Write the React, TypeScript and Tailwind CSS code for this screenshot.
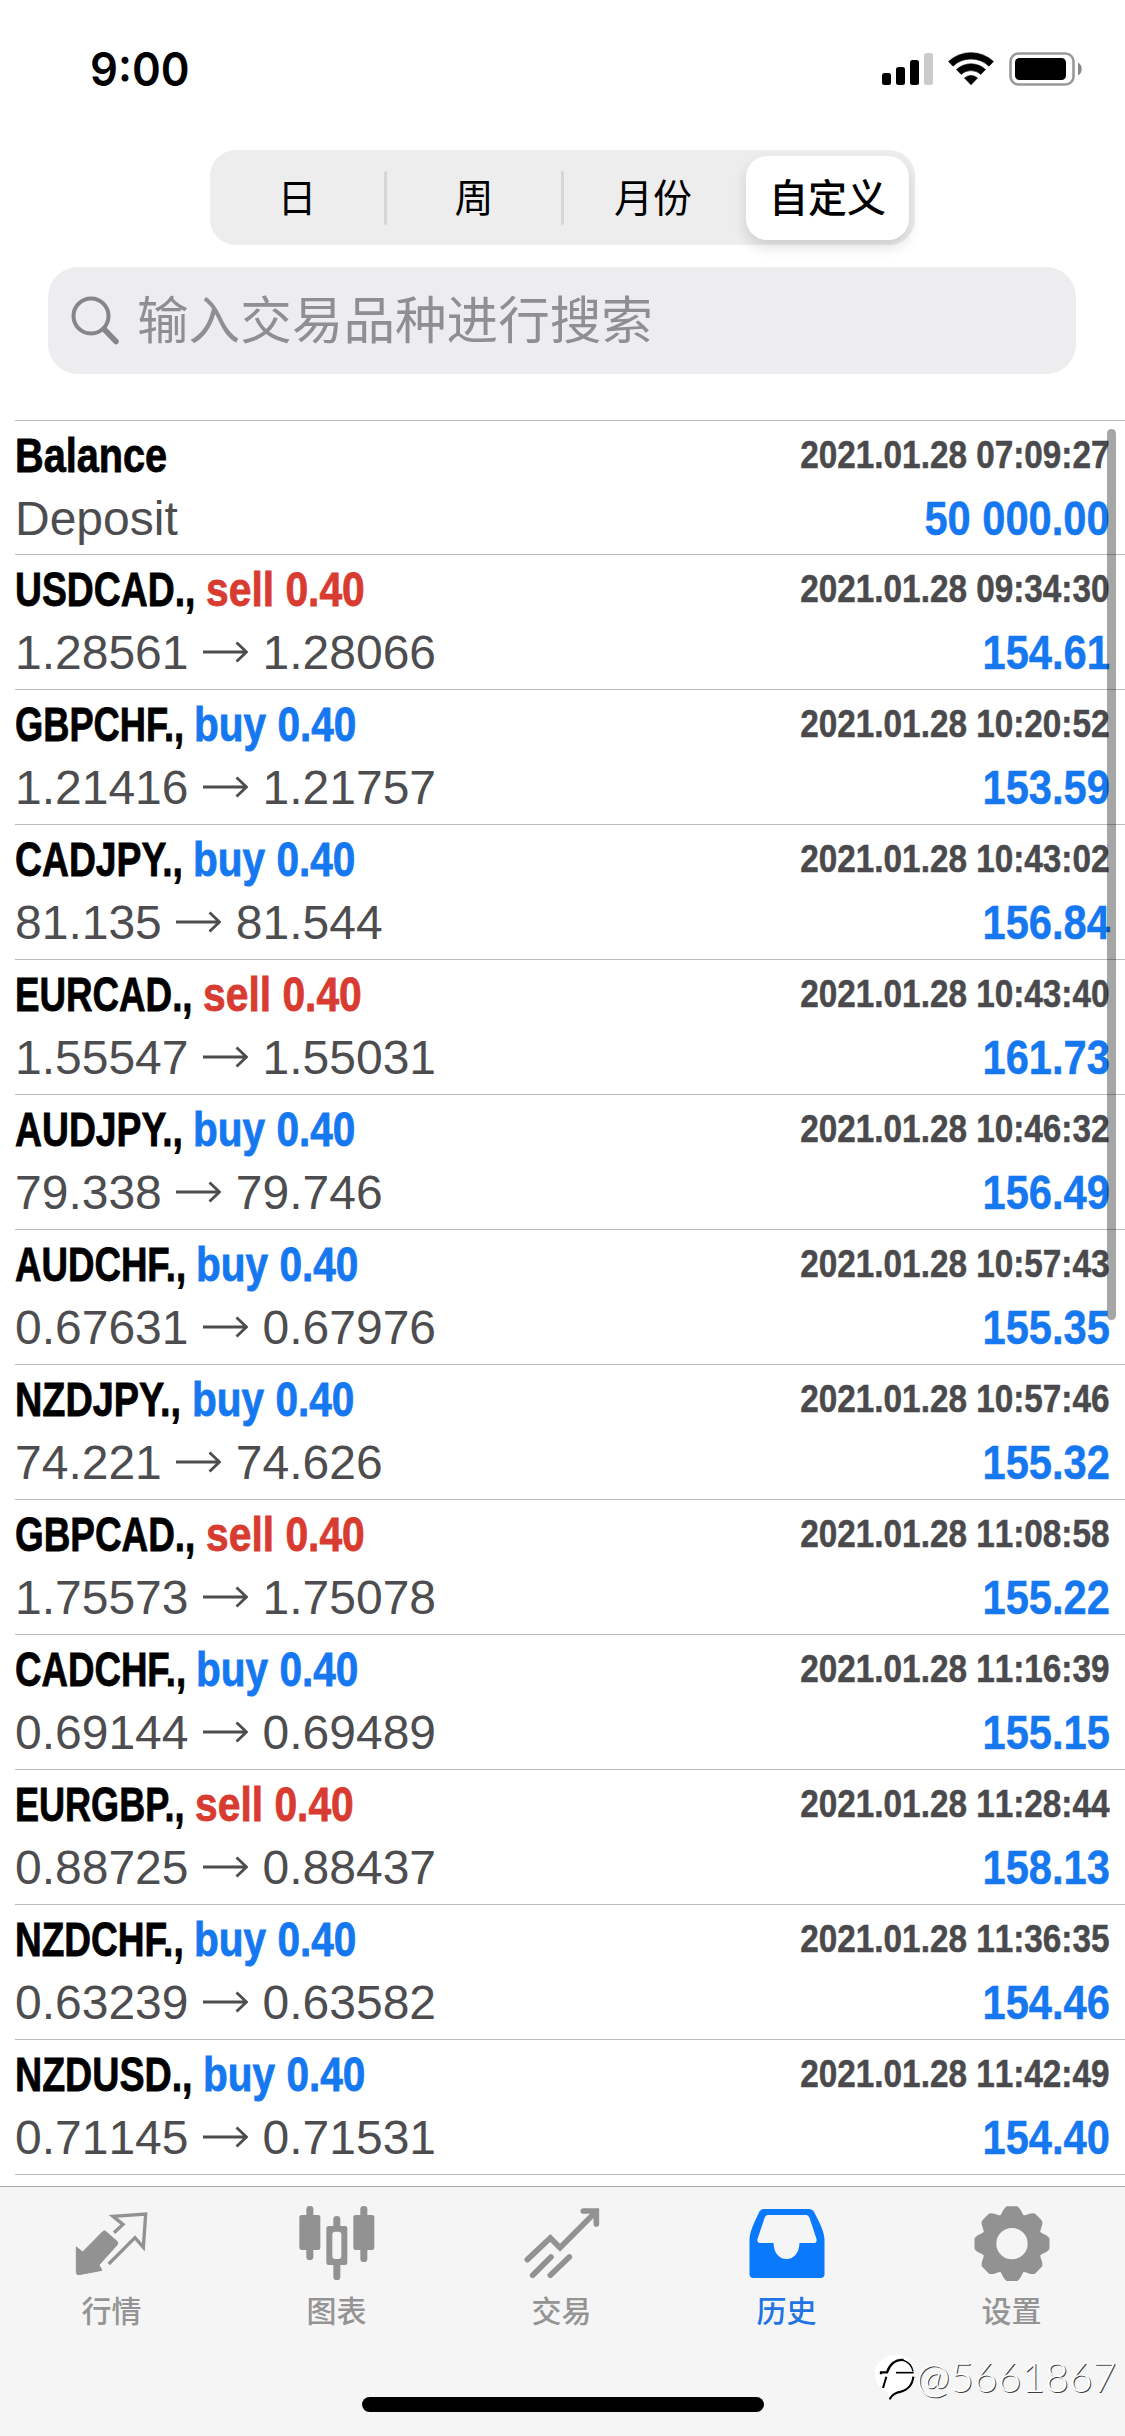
import { ReactNode, useLayoutEffect, useRef, useState } from 'react';

type Deal = {
  symbol: string;
  symbolWidth: number;
  side: 'buy' | 'sell';
  open: string;
  close: string;
  time: string;
  profit: string;
};

const DEALS: Deal[] = [
  { symbol: 'USDCAD.', symbolWidth: 190.5, side: 'sell', open: '1.28561', close: '1.28066', time: '09:34:30', profit: '154.61' },
  { symbol: 'GBPCHF.', symbolWidth: 179, side: 'buy', open: '1.21416', close: '1.21757', time: '10:20:52', profit: '153.59' },
  { symbol: 'CADJPY.', symbolWidth: 178, side: 'buy', open: '81.135', close: '81.544', time: '10:43:02', profit: '156.84' },
  { symbol: 'EURCAD.', symbolWidth: 187.5, side: 'sell', open: '1.55547', close: '1.55031', time: '10:43:40', profit: '161.73' },
  { symbol: 'AUDJPY.', symbolWidth: 178, side: 'buy', open: '79.338', close: '79.746', time: '10:46:32', profit: '156.49' },
  { symbol: 'AUDCHF.', symbolWidth: 181, side: 'buy', open: '0.67631', close: '0.67976', time: '10:57:43', profit: '155.35' },
  { symbol: 'NZDJPY.', symbolWidth: 176.5, side: 'buy', open: '74.221', close: '74.626', time: '10:57:46', profit: '155.32' },
  { symbol: 'GBPCAD.', symbolWidth: 190.5, side: 'sell', open: '1.75573', close: '1.75078', time: '11:08:58', profit: '155.22' },
  { symbol: 'CADCHF.', symbolWidth: 181, side: 'buy', open: '0.69144', close: '0.69489', time: '11:16:39', profit: '155.15' },
  { symbol: 'EURGBP.', symbolWidth: 179.5, side: 'sell', open: '0.88725', close: '0.88437', time: '11:28:44', profit: '158.13' },
  { symbol: 'NZDCHF.', symbolWidth: 179, side: 'buy', open: '0.63239', close: '0.63582', time: '11:36:35', profit: '154.46' },
  { symbol: 'NZDUSD.', symbolWidth: 188, side: 'buy', open: '0.71145', close: '0.71531', time: '11:42:49', profit: '154.40' },
];

// Squeezes a line of text horizontally so it takes exactly `width` pixels.
function FitText({ width, children }: { width: number; children: string }) {
  const ref = useRef<HTMLSpanElement>(null);
  const [scale, setScale] = useState(1);

  useLayoutEffect(() => {
    if (ref.current) setScale(width / ref.current.offsetWidth);
  }, [width, children]);

  return (
    <span className="block shrink-0" style={{ width }}>
      <span
        ref={ref}
        className="inline-block origin-left whitespace-pre"
        style={{ transform: `scaleX(${scale})` }}
      >
        {children}
      </span>
    </span>
  );
}

function StatusBar() {
  return (
    <div className="flex h-[150px] items-start justify-between pt-[52px] pr-[43px] pl-[90px]">
      <span className="origin-left scale-x-[0.93] font-['Inter'] text-[47px] leading-[34px] font-semibold">
        9:00
      </span>
      <svg width="201" height="34" viewBox="0 0 201 34">
        <rect x="1" y="21" width="9" height="12" rx="2.5" />
        <rect x="15" y="15" width="9" height="18" rx="2.5" />
        <rect x="29" y="8" width="9" height="25" rx="2.5" />
        <rect x="43" y="1" width="9" height="32" rx="2.5" fill="#cbcbcb" />
        <path d="M67.5 9.5 A33 33 0 0 1 112.5 9.5 L108 14.2 A26 26 0 0 0 72 14.2 Z" strokeLinejoin="round" stroke="#000" strokeWidth="0.6" />
        <path d="M75.5 17.6 A21 21 0 0 1 104.500 17.600 L99.800 22.400 A14.500 14.500 0 0 0 80.200 22.400 Z" strokeLinejoin="round" stroke="#000" strokeWidth="0.6" />
        <path d="M83.500 26 A9.500 9.500 0 0 1 96.500 26 L90 32.800 Z" strokeLinejoin="round" stroke="#000" strokeWidth="0.6" />
        <rect x="129.500" y="1.500" width="63" height="31" rx="8" fill="none" stroke="#999" strokeWidth="2.600" />
        <rect x="134" y="6" width="51" height="22" rx="4.500" />
        <path d="M197 10.500 a7.500 7.500 0 0 1 0 13 Z" fill="#888" />
      </svg>
    </div>
  );
}

function PeriodTabs() {
  return (
    <div className="mx-auto flex h-[95px] w-[705px] items-center rounded-[26px] bg-[#ededed] text-[39px] leading-none">
      <span className="w-[174px] text-center">日</span>
      <span className="h-[54px] w-[3px] rounded bg-[#d6d6d7]" />
      <span className="w-[174px] text-center">周</span>
      <span className="h-[54px] w-[3px] rounded bg-[#d6d6d7]" />
      <span className="w-[178px] text-center">月份</span>
      <span className="ml-[4px] flex h-[84px] w-[163px] items-center justify-center rounded-[21px] bg-white font-medium shadow-[0_7px_14px_rgba(0,0,0,0.13)]">
        自定义
      </span>
    </div>
  );
}

function SearchField() {
  return (
    <div className="mt-[22px] ml-12 flex h-[107px] w-[1028px] items-center rounded-[30px] bg-[#ededef] pl-[23px]">
      <svg className="shrink-0" width="49" height="50" viewBox="0 0 49 50" fill="none" stroke="#868688">
        <circle cx="20" cy="20" r="17.500" strokeWidth="4" />
        <path d="M33 33 L45 45.500" strokeWidth="5.500" strokeLinecap="round" />
      </svg>
      <span className="ml-[17px] text-[51.600px] leading-none text-[#8f8f92]">
        输入交易品种进行搜索
      </span>
    </div>
  );
}

function HistoryRow({ title, detail, time, amount }: { title: ReactNode; detail: ReactNode; time: string; amount: string }) {
  return (
    <div className="ml-[15px] flex h-[135px] justify-between border-t border-[#bcbcbe] pt-[5px] pr-[15px] font-['Liberation_Sans',sans-serif]">
      <div>
        <div className="flex h-[60px] text-[48px] leading-[60px] font-bold [-webkit-text-stroke:0.8px]">{title}</div>
        <div className="flex h-[65px] text-[48px] leading-[65px] text-[#4d4d50] [font-kerning:none]">{detail}</div>
      </div>
      <div className="flex flex-col items-end font-bold [font-kerning:none] [-webkit-text-stroke:0.5px]">
        <div className="h-[60px] origin-right scale-x-[0.865] text-[38.500px] leading-[57px] whitespace-nowrap text-[#4a4a4d]">
          2021.01.28 {time}
        </div>
        <div className="h-[65px] origin-right scale-x-[0.867] text-[48px] leading-[65px] whitespace-nowrap text-[#1678f0]">
          {amount}
        </div>
      </div>
    </div>
  );
}

function PriceArrow() {
  return (
    <svg className="mt-[21px] mr-[15px] ml-[14px]" width="45" height="22" viewBox="0 0 45 22" fill="none" stroke="#4d4d50" strokeWidth="2.800">
      <path d="M0 11 H43 M33.500 1.500 L43.500 11 L33.500 20.500" />
    </svg>
  );
}

function History() {
  return (
    <div className="relative mt-[46px] h-[1766px] overflow-hidden">
      <div className="-mb-px">
        <HistoryRow
          title={<FitText width={152}>Balance</FitText>}
          detail={<span>Deposit</span>}
          time="07:09:27"
          amount="50 000.00"
        />
      </div>
      {DEALS.map((d) => (
        <HistoryRow
          key={d.symbol}
          title={
            <>
              <FitText width={d.symbolWidth}>{`${d.symbol}, `}</FitText>
              <span
                className={
                  d.side === 'buy'
                    ? 'origin-left scale-x-[0.845] whitespace-nowrap text-[#1678f0]'
                    : 'origin-left scale-x-[0.85] whitespace-nowrap text-[#d83c31]'
                }
              >
                {d.side} 0.40
              </span>
            </>
          }
          detail={
            <>
              <span>{d.open}</span>
              <PriceArrow />
              <span>{d.close}</span>
            </>
          }
          time={d.time}
          amount={d.profit}
        />
      ))}
      <div className="ml-[15px] border-t border-[#bcbcbe]" />
      <div className="absolute top-[9px] right-[9px] h-[891px] w-[9px] rounded-full bg-black/35" />
    </div>
  );
}

function QuotesIcon() {
  return (
    <svg width="76" height="76" viewBox="221 134 228 228">
      <path
        d="M228 260 L247 275 L307 214 Q312 209 317 214 L350 243 Q355 248 350 254 L296 314 L305 330 L236 343 Q228 344 228 336 Z"
        fill="#929292"
        stroke="#929292"
        strokeWidth="3"
        strokeLinejoin="round"
      />
      <path d="M341 217 L368 192 L338 168 L436 161 L429 261 L404 232 L325 311" fill="none" stroke="#929292" strokeWidth="10" />
    </svg>
  );
}

function ChartsIcon() {
  return (
    <svg width="76" height="76" viewBox="896 135 228 228" fill="#929292">
      <rect x="918" y="138" width="21" height="162" rx="10" />
      <rect x="897" y="165" width="63" height="105" rx="7" />
      <rect x="999" y="168" width="21" height="192" rx="10" />
      <rect x="978" y="198" width="63" height="117" rx="7" />
      <rect x="996" y="215" width="27" height="82" rx="9" fill="#f5f5f5" />
      <rect x="1080" y="138" width="21" height="168" rx="10" />
      <rect x="1059" y="165" width="63" height="105" rx="7" />
    </svg>
  );
}

function TradeIcon() {
  return (
    <svg width="76" height="76" viewBox="371 135 228 228" fill="none" stroke="#929292" strokeWidth="17" strokeLinecap="round">
      <path d="M381 299 L450 234 L479 263 L586 156" />
      <path d="M549 153 H588 V192" />
      <path d="M397 346 L452 291 M450 346 L507 291" />
    </svg>
  );
}

function HistoryIcon() {
  return (
    <svg width="76" height="76" viewBox="70.500 135 228 228" fill="#0b79fb" fillRule="evenodd">
      <path d="M115 147 H250 Q262 147 267 158 C282 188 297 215 297 240 V342 Q297 354 285 354 H84 Q72 354 72 342 V240 C72 215 87 185 100 158 Q105 147 115 147 Z M128 165 Q121 165 118 172 L96 237 Q94 249 104 249 H144 C145 279 161 297 183 297 C205 297 221 279 222 249 H264 Q275 249 273 237 L252 173 Q249 165 242 165 Z" />
    </svg>
  );
}

const TEETH = [0, 45, 90, 135, 180, 225, 270, 315];

function SettingsIcon() {
  return (
    <svg width="76" height="76" viewBox="-114 -116 228 228">
      <circle r="68.500" fill="none" stroke="#929292" strokeWidth="43" />
      {TEETH.map((angle) => (
        <path
          key={angle}
          transform={`rotate(${angle})`}
          d="M-42 -76 Q-34 -84 -29 -95 Q-21 -112.500 -13 -112.500 H13 Q21 -112.500 29 -95 Q34 -84 42 -76 Z"
          fill="#929292"
        />
      ))}
    </svg>
  );
}

const TABS = [
  { label: '行情', icon: <QuotesIcon /> },
  { label: '图表', icon: <ChartsIcon /> },
  { label: '交易', icon: <TradeIcon /> },
  { label: '历史', icon: <HistoryIcon />, active: true },
  { label: '设置', icon: <SettingsIcon /> },
];

function TabBar() {
  return (
    <div className="h-[250px] border-t border-[#a9a9ab] bg-[#f5f5f5]">
      <div className="-ml-px flex w-[1125px] pt-[18px]">
        {TABS.map((tab) => (
          <div key={tab.label} className="flex flex-1 flex-col items-center">
            {tab.icon}
            <span
              className={
                tab.active
                  ? 'mt-[14px] text-[30px] leading-[32px] font-medium text-[#2274e4]'
                  : 'mt-[14px] text-[30px] leading-[32px] font-medium text-[#949494]'
              }
            >
              {tab.label}
            </span>
          </div>
        ))}
      </div>
      <div className="mx-auto mt-[70px] h-[15px] w-[402px] rounded-full bg-black" />
    </div>
  );
}

function Watermark() {
  return (
    <div className="absolute top-[2352px] left-[873px] flex items-start">
      <svg width="44" height="50" viewBox="36 66 132 150" fill="none" stroke="#000">
        <path d="M100 76 C135 70 162 100 160 130 C158 165 135 188 108 192 L84 212 L80 186 C55 178 42 155 42 128 C42 100 70 76 100 76 Z" fill="#fff" stroke="none" />
        <path d="M60 133 V127 H78 C86 103 105 86 127 90" strokeWidth="7" />
        <path d="M125 90 C143 96 153 108 156 124" strokeWidth="4" />
        <path d="M105 128 H158" strokeWidth="5" />
        <path d="M76 140 L66 174" strokeWidth="6" />
        <path d="M157 140 C154 172 130 185 108 188 Q92 194 86 208" strokeWidth="6.500" />
      </svg>
      <span className="-mt-[1px] -ml-[1px] origin-left scale-x-[0.975] font-['Lato'] text-[42px] leading-[50px] font-light text-white [text-shadow:1px_1px_0_rgba(0,0,0,0.75)]">
        @5661867
      </span>
    </div>
  );
}

export default function App() {
  return (
    <div className="relative h-[2436px] w-[1125px] overflow-hidden bg-white font-['Inter','Noto_Sans_CJK_SC',sans-serif] text-black">
      <StatusBar />
      <PeriodTabs />
      <SearchField />
      <History />
      <TabBar />
      <Watermark />
    </div>
  );
}
